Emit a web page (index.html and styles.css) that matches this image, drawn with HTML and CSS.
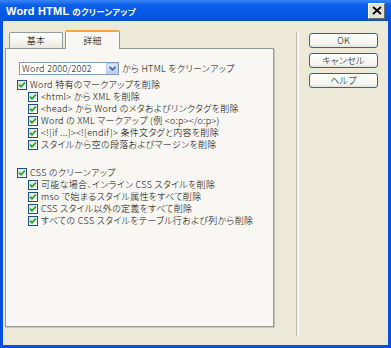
FILE: index.html
```html
<!DOCTYPE html>
<html>
<head>
    <meta charset="utf-8">
    <title>Word HTML のクリーンアップ</title>
    <link rel="stylesheet" href="styles.css">
</head>
<body>
    <div class="window">
        <div class="titlebar">
            <span class="title">Word HTML <span class="title-ja">のクリーンアップ</span></span>
            <span class="close-btn">
                <svg width="10" height="9" viewBox="0 0 10 9"><path d="M1 1 L9 8 M9 1 L1 8" stroke="#000" stroke-width="1.8"/></svg>
            </span>
        </div>

        <div class="client">
            <div class="left">
                <div class="tabs">
                    <div class="tab">基本</div>
                    <div class="tab active">詳細</div>
                </div>
                <div class="panel">
                    <div class="source-row">
                        <div class="select">
                            <span class="select-text">Word 2000/2002</span>
                            <span class="select-arrow">
                                <svg width="7" height="5" viewBox="0 0 7 5"><path d="M0.5 0.8 L3.5 3.8 L6.5 0.8" fill="none" stroke="#4d6185" stroke-width="1.6"/></svg>
                            </span>
                        </div>
                        <span class="source-label">から HTML をクリーンアップ</span>
                    </div>

                    <div class="group">
                        <div class="row"><span class="cb"><svg width="8" height="8" viewBox="0 0 8 8"><path d="M1 3.6 L3 5.8 L7 1.5" fill="none" stroke="#21a121" stroke-width="1.7"/></svg></span>Word 特有のマークアップを削除</div>
                        <div class="row sub"><span class="cb"><svg width="8" height="8" viewBox="0 0 8 8"><path d="M1 3.6 L3 5.8 L7 1.5" fill="none" stroke="#21a121" stroke-width="1.7"/></svg></span>&lt;html&gt; から XML を削除</div>
                        <div class="row sub"><span class="cb"><svg width="8" height="8" viewBox="0 0 8 8"><path d="M1 3.6 L3 5.8 L7 1.5" fill="none" stroke="#21a121" stroke-width="1.7"/></svg></span>&lt;head&gt; から Word のメタおよびリンクタグを削除</div>
                        <div class="row sub"><span class="cb"><svg width="8" height="8" viewBox="0 0 8 8"><path d="M1 3.6 L3 5.8 L7 1.5" fill="none" stroke="#21a121" stroke-width="1.7"/></svg></span>Word の XML マークアップ (例 &lt;o:p&gt;&lt;/o:p&gt;)</div>
                        <div class="row sub"><span class="cb"><svg width="8" height="8" viewBox="0 0 8 8"><path d="M1 3.6 L3 5.8 L7 1.5" fill="none" stroke="#21a121" stroke-width="1.7"/></svg></span>&lt;![if ...]&gt;&lt;![endif]&gt; 条件文タグと内容を削除</div>
                        <div class="row sub"><span class="cb"><svg width="8" height="8" viewBox="0 0 8 8"><path d="M1 3.6 L3 5.8 L7 1.5" fill="none" stroke="#21a121" stroke-width="1.7"/></svg></span>スタイルから空の段落およびマージンを削除</div>
                    </div>

                    <div class="group css-group">
                        <div class="row"><span class="cb"><svg width="8" height="8" viewBox="0 0 8 8"><path d="M1 3.6 L3 5.8 L7 1.5" fill="none" stroke="#21a121" stroke-width="1.7"/></svg></span>CSS のクリーンアップ</div>
                        <div class="row sub"><span class="cb"><svg width="8" height="8" viewBox="0 0 8 8"><path d="M1 3.6 L3 5.8 L7 1.5" fill="none" stroke="#21a121" stroke-width="1.7"/></svg></span>可能な場合、インライン CSS スタイルを削除</div>
                        <div class="row sub"><span class="cb"><svg width="8" height="8" viewBox="0 0 8 8"><path d="M1 3.6 L3 5.8 L7 1.5" fill="none" stroke="#21a121" stroke-width="1.7"/></svg></span>mso で始まるスタイル属性をすべて削除</div>
                        <div class="row sub"><span class="cb"><svg width="8" height="8" viewBox="0 0 8 8"><path d="M1 3.6 L3 5.8 L7 1.5" fill="none" stroke="#21a121" stroke-width="1.7"/></svg></span>CSS スタイル以外の定義をすべて削除</div>
                        <div class="row sub"><span class="cb"><svg width="8" height="8" viewBox="0 0 8 8"><path d="M1 3.6 L3 5.8 L7 1.5" fill="none" stroke="#21a121" stroke-width="1.7"/></svg></span>すべての CSS スタイルをテーブル行および列から削除</div>
                    </div>
                </div>
            </div>

            <div class="separator"></div>

            <div class="buttons">
                <div class="btn">OK</div>
                <div class="btn">キャンセル</div>
                <div class="btn">ヘルプ</div>
            </div>
        </div>
    </div>
</body>
</html>
```

FILE: styles.css
```css
html, body { margin: 0; padding: 0; }
body {
    width: 391px;
    height: 348px;
    overflow: hidden;
    font-family: "Noto Sans CJK JP", "Liberation Sans", sans-serif;
    font-size: 9px;
    font-weight: 300;
    font-feature-settings: "palt";
    letter-spacing: 0.3px;
    color: #000;
}
.window {
    width: 391px;
    height: 348px;
    box-sizing: border-box;
    background: #0a55e0;
    border: 3px solid #0550dc;
    border-top: none;
    display: flex;
    flex-direction: column;
}
.titlebar {
    height: 21px;
    margin: 0 -3px;
    padding: 0 6px 0 6px;
    display: flex;
    align-items: center;
    background: linear-gradient(#3a84f6, #0a5ee9 25%, #0357e4 75%, #0850d6);
}
.title {
    color: #fff;
    font-family: "Liberation Sans", sans-serif;
    font-weight: bold;
    font-size: 11px;
    letter-spacing: 0.2px;
}
.title-ja {
    font-family: "Noto Sans CJK JP", sans-serif;
    font-size: 8.5px;
    letter-spacing: 0.2px;
}
.close-btn {
    margin-left: auto;
    width: 15px;
    height: 14px;
    background: #e3e1d6;
    border: 1px solid;
    border-color: #fff #6b6b6b #6b6b6b #fff;
    display: flex;
    align-items: center;
    justify-content: center;
}
.client {
    flex: 1;
    background: #ece9d8;
    display: flex;
    padding: 9px 0 0 2px;
}
.left { width: 269px; }
.tabs {
    height: 18px;
    display: flex;
    align-items: flex-end;
    padding-left: 4px;
}
.tab {
    width: 54px;
    height: 16px;
    box-sizing: border-box;
    border: 1px solid #919b9c;
    border-bottom: none;
    border-radius: 2px 2px 0 0;
    background: linear-gradient(#fefefe, #f2f1ea 70%, #e8e6dc);
    display: flex;
    align-items: center;
    justify-content: center;
}
.tab.active {
    width: 55px;
    height: 19px;
    margin-left: 2px;
    margin-bottom: -1px;
    position: relative;
    background: #f8f7f3;
    border-top: 2px solid #f3a63a;
}
.panel {
    height: 279px;
    box-sizing: border-box;
    border: 1px solid #919b9c;
    background: #f8f7f3;
    box-shadow: 1px 1px 0 #c9c7bb;
    padding: 13px 0 0 11px;
}
.source-row {
    display: flex;
    align-items: center;
    margin-left: 2px;
    height: 13px;
}
.select {
    width: 100px;
    height: 13px;
    box-sizing: border-box;
    border: 1px solid #7f9db9;
    background: #fff;
    display: flex;
    align-items: center;
}
.select-text {
    flex: 1;
    padding-left: 2px;
    line-height: 11px;
}
.select-arrow {
    width: 12px;
    height: 11px;
    box-sizing: border-box;
    border: 1px solid #b9cdf6;
    background: linear-gradient(#dce7fe, #bccffa);
    display: flex;
    align-items: center;
    justify-content: center;
}
.source-label { margin-left: 3px; }
.group { margin-top: 4px; }
.css-group { margin-top: 16px; }
.row {
    height: 12px;
    display: flex;
    align-items: center;
    white-space: nowrap;
    line-height: 12px;
}
.row.sub { margin-left: 11px; }
.cb {
    width: 10px;
    height: 10px;
    box-sizing: border-box;
    border: 1px solid #1c5180;
    background: linear-gradient(135deg, #dcdcd7, #fff);
    margin-right: 3px;
    display: flex;
    align-items: center;
    justify-content: center;
    flex-shrink: 0;
}
.separator {
    width: 1px;
    height: 304px;
    margin: 2px 0 0 22px;
    border-left: 1px solid #c5c2b2;
    border-right: 1px solid #fff;
}
.buttons {
    margin: 3px 0 0 10px;
    display: flex;
    flex-direction: column;
    gap: 5px;
}
.btn {
    width: 69px;
    height: 15px;
    box-sizing: border-box;
    border: 1px solid #3d6287;
    border-radius: 3px;
    background: linear-gradient(#fff, #f4f3ee 80%, #e3e1d8);
    display: flex;
    align-items: center;
    justify-content: center;
    line-height: 13px;
}
```
